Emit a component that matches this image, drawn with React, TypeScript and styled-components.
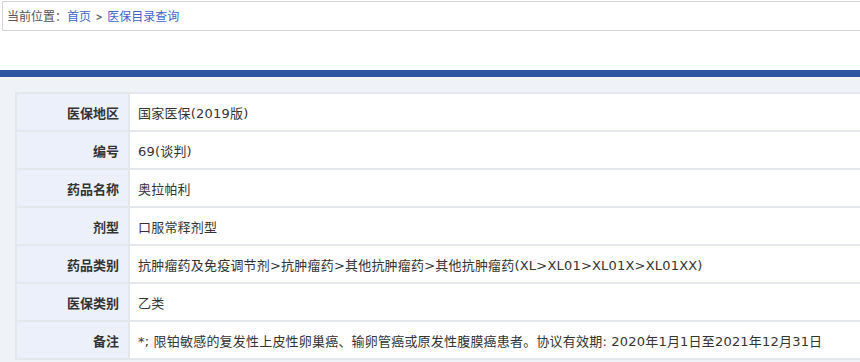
import React, { FC } from "react"
import styled, { createGlobalStyle } from "styled-components"

const GlobalStyle = createGlobalStyle`
    html, body {
        margin: 0;
        padding: 0;
        background: #fff;
        overflow: hidden;
        font-family: "Noto Sans", "Noto Sans CJK SC", sans-serif;
    }
`

const Page = styled.div`
    width: 860px;
    height: 362px;
    overflow: hidden;
`

const Crumbs = styled.div`
    display: flex;
    align-items: center;
    height: 28px;
    margin: 1px -10px 0 2px;
    padding-left: 4px;
    border: 1px solid #d4d4d4;
    font-size: 12px;
    color: #555;
`

const CrumbLink = styled.a`
    color: #3f63c8;
    text-decoration: none;
`

const Sep = styled.span`
    color: #666;
    margin: 0 5px;
    font-size: 11px;
    font-weight: bold;
`

const TopBar = styled.div`
    height: 7px;
    margin-top: 39px;
    background: #2b55a3;
`

const Section = styled.div`
    background: #eff3f8;
    padding: 15px 0 0 15px;
    height: 300px;
`

const Table = styled.div`
    display: grid;
    grid-template-columns: 113px 1fr;
    margin-right: -20px;
    border-top: 2px solid #e4e7eb;
    border-left: 2px solid #e4e7eb;
    background: #fff;
`

const Label = styled.div`
    height: 36px;
    display: flex;
    align-items: center;
    justify-content: flex-end;
    padding-right: 9px;
    background: #ebf0fa;
    border-bottom: 2px solid #e4e7eb;
    border-right: 2px solid #e4e7eb;
    font-size: 13px;
    font-weight: bold;
    color: #333;
`

const Value = styled.div`
    height: 36px;
    display: flex;
    align-items: center;
    padding-left: 8px;
    border-bottom: 2px solid #e4e7eb;
    font-family: "DejaVu Sans", "Noto Sans CJK SC", sans-serif;
    font-size: 13px;
    letter-spacing: 0.2px;
    color: #333;
    white-space: nowrap;
`

const rows: [string, string][] = [
    ["医保地区", "国家医保(2019版)"],
    ["编号", "69(谈判)"],
    ["药品名称", "奥拉帕利"],
    ["剂型", "口服常释剂型"],
    ["药品类别", "抗肿瘤药及免疫调节剂>抗肿瘤药>其他抗肿瘤药>其他抗肿瘤药(XL>XL01>XL01X>XL01XX)"],
    ["医保类别", "乙类"],
    ["备注", "*; 限铂敏感的复发性上皮性卵巢癌、输卵管癌或原发性腹膜癌患者。协议有效期: 2020年1月1日至2021年12月31日"],
]

const App: FC = () => {
    return (
        <Page>
            <GlobalStyle />
            <Crumbs>
                当前位置：
                <CrumbLink href="#">首页</CrumbLink>
                <Sep>&gt;</Sep>
                <CrumbLink href="#">医保目录查询</CrumbLink>
            </Crumbs>
            <TopBar />
            <Section>
                <Table>
                    {rows.map(([k, v]) => (
                        <React.Fragment key={k}>
                            <Label>{k}</Label>
                            <Value>{v}</Value>
                        </React.Fragment>
                    ))}
                </Table>
            </Section>
        </Page>
    )
}

export default App
